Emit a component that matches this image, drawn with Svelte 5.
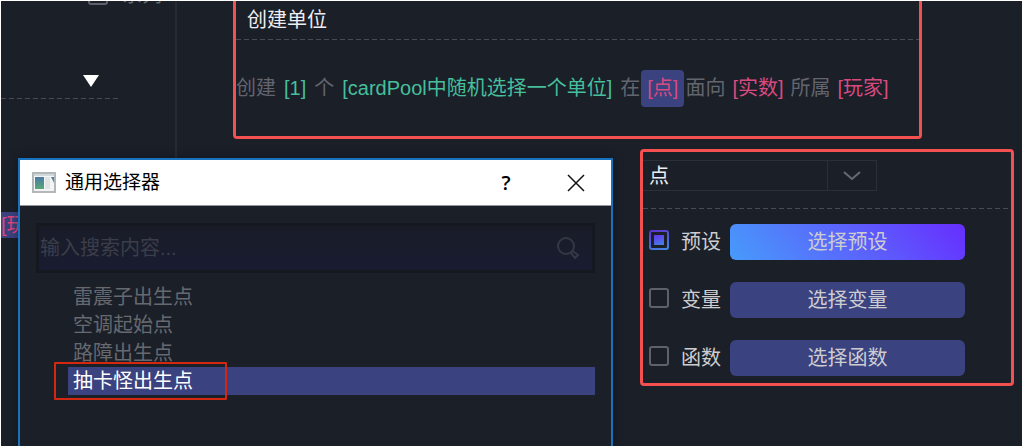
<script lang="ts">
  interface Token {
    text: string;
    kind: 'plain' | 'value' | 'empty';
    active?: boolean;
  }

  interface Source {
    id: string;
    label: string;
  }

  const tokens: Token[] = [
    { text: '创建', kind: 'plain' },
    { text: '[1]', kind: 'value' },
    { text: '个', kind: 'plain' },
    { text: '[cardPool中随机选择一个单位]', kind: 'value' },
    { text: '在', kind: 'plain' },
    { text: '[点]', kind: 'empty', active: true },
    { text: '面向', kind: 'plain' },
    { text: '[实数]', kind: 'empty' },
    { text: '所属', kind: 'plain' },
    { text: '[玩家]', kind: 'empty' },
  ];

  const sources: Source[] = [
    { id: 'preset', label: '预设' },
    { id: 'variable', label: '变量' },
    { id: 'function', label: '函数' },
  ];

  const points = ['雷震子出生点', '空调起始点', '路障出生点', '抽卡怪出生点'];

  let source = $state('preset');
  let point = $state('抽卡怪出生点');
  let query = $state('');
</script>

<div class="editor">
  <aside class="sidebar">
    <label class="series">
      <input type="checkbox" class="check" />
      系列
    </label>
    <button class="fold dashed" aria-label="折叠">
      <svg width="16" height="12" viewBox="0 0 16 12"><path d="M0 0h16L8 12z" fill="#fff" /></svg>
    </button>
    <button class="param">[玩家]</button>
  </aside>

  <main class="main">
    <section class="card action">
      <h2 class="action-title dashed">创建单位</h2>
      <p class="sentence">
        {#each tokens as token}
          {#if token.kind === 'plain'}
            <span>{token.text}</span>
          {:else}
            <button class="token {token.kind}" class:active={token.active}>{token.text}</button>
          {/if}
        {/each}
      </p>
    </section>

    <section class="card picker">
      <div class="type-row dashed">
        <div class="type">
          <select class="type-select" aria-label="类型">
            <option>点</option>
          </select>
          <span class="type-arrow">
            <svg width="18" height="10" viewBox="0 0 18 10">
              <path d="M1 1l8 7 8-7" fill="none" stroke="#666a73" stroke-width="2" />
            </svg>
          </span>
        </div>
      </div>
      <div class="sources">
        {#each sources as item}
          <div class="source">
            <label class="source-label">
              <input
                type="checkbox"
                class="check"
                checked={source === item.id}
                onchange={() => (source = item.id)}
              />
              {item.label}
            </label>
            <button class="choose" class:current={source === item.id}>选择{item.label}</button>
          </div>
        {/each}
      </div>
    </section>
  </main>

  <div class="dialog" role="dialog" aria-labelledby="dialog-title">
    <header class="titlebar">
      <svg width="24" height="21" viewBox="0 0 24 21">
        <defs>
          <linearGradient id="pane" x1="0" y1="0" x2="0" y2="1">
            <stop offset="0" stop-color="#4b79a8" />
            <stop offset="1" stop-color="#58a877" />
          </linearGradient>
        </defs>
        <rect x="1" y="1" width="22" height="19" fill="#f4f4f5" stroke="#b4b7b9" stroke-width="2" />
        <path d="M2 2h20v2H2z" fill="#d3d8da" />
        <rect x="3" y="5" width="9" height="12" fill="url(#pane)" />
        <rect x="13" y="5" width="5" height="12" fill="#e2e3e5" />
        <path d="M19 5h3v6z" fill="url(#pane)" />
      </svg>
      <h1 class="dialog-title" id="dialog-title">通用选择器</h1>
      <button class="window-button" aria-label="帮助">?</button>
      <button class="window-button" aria-label="关闭">
        <svg width="18" height="18" viewBox="0 0 18 18">
          <path d="M1 1l16 16M17 1L1 17" stroke="#111" stroke-width="1.5" />
        </svg>
      </button>
    </header>
    <div class="dialog-body">
      <div class="search">
        <input class="search-input" placeholder="输入搜索内容..." aria-label="搜索" bind:value={query} />
        <svg width="24" height="24" viewBox="0 0 24 24" fill="none" stroke="#353844" stroke-width="2">
          <circle cx="10" cy="10" r="8" />
          <path d="M15 17l2-2 5 4-3 3z" />
        </svg>
      </div>
      <ul class="points">
        {#each points as name}
          <li>
            <button class="point" class:selected={point === name} onclick={() => (point = name)}>
              {name}
            </button>
          </li>
        {/each}
      </ul>
    </div>
  </div>
</div>

<style>
  :global(body) {
    background: #1b1f28;
  }

  .editor,
  .editor * {
    box-sizing: border-box;
  }

  .editor {
    position: relative;
    display: flex;
    height: 100vh;
    overflow: hidden;
    border-top: 1px solid #fff;
    border-left: 1px solid #fff;
    background: #1b1f28;
    color: #cdcdd0;
    font-family: "Liberation Sans", "Noto Sans CJK SC", sans-serif;
    font-size: 20px;
    line-height: 28px;
  }

  button,
  input,
  select {
    margin: 0;
    padding: 0;
    border: 0;
    background: none;
    color: inherit;
    font: inherit;
  }

  h1,
  h2,
  p,
  ul {
    margin: 0;
    padding: 0;
    font-size: 20px;
    font-weight: 400;
    list-style: none;
  }

  .dashed {
    background: repeating-linear-gradient(90deg, #484b54 0 5px, transparent 5px 8px) left bottom / 100% 1px no-repeat;
  }

  .check {
    appearance: none;
    flex: none;
    width: 20px;
    height: 20px;
    border: 2px solid #5e616a;
    border-radius: 3px;
  }

  .check:checked {
    padding: 3px;
    border-color: transparent;
    background:
      linear-gradient(160deg, #6732ee, #4385e0) content-box,
      linear-gradient(#1b1f28, #1b1f28) padding-box,
      linear-gradient(160deg, #5f2fd0, #418de0) border-box;
  }

  .sidebar {
    flex: none;
    display: flex;
    flex-direction: column;
    align-items: flex-start;
    width: 176px;
    border-right: 2px solid #262a35;
  }

  .series {
    display: flex;
    align-items: center;
    gap: 14px;
    height: 28px;
    margin: -20px 0 0 87px;
    color: #666a70;
  }

  .fold {
    display: flex;
    width: 120px;
    height: 90px;
    padding: 66px 0 0 82px;
  }

  .param {
    height: 26px;
    margin-top: 113px;
    background-color: #3a4280;
    color: #e0457b;
    line-height: 26px;
  }

  .main {
    flex: 1;
    display: flex;
    flex-direction: column;
    gap: 10px;
    min-width: 0;
  }

  .card {
    border: 3px solid #f4504f;
    border-radius: 4px;
  }

  .action {
    height: 138px;
    margin: 0 100px 0 56px;
    border-top: 0;
    border-radius: 0 0 4px 4px;
  }

  .action-title {
    height: 39px;
    padding: 5px 11px;
    color: #eeeef2;
  }

  .sentence {
    display: flex;
    gap: 1px;
    align-items: center;
    height: 96px;
    color: #62656e;
    white-space: nowrap;
  }

  .token {
    height: 37px;
    border-radius: 4px;
  }

  .value {
    padding: 0 7px;
    color: #46bf9c;
  }

  .empty {
    padding: 0 6px;
    color: #d94a80;
  }

  .active {
    background: #3a4280;
  }

  .picker {
    align-self: flex-end;
    width: 374px;
    height: 237px;
    margin-right: 8px;
  }

  .type-row {
    height: 57px;
    padding-top: 8px;
  }

  .type {
    display: grid;
    grid-template-columns: 1fr 49px;
    width: 234px;
    height: 31px;
    border: 1px solid #2b2f3a;
    border-left: 0;
  }

  .type-select {
    appearance: none;
    grid-area: 1 / 1 / 2 / 3;
    padding: 0 6px;
    color: #eeeef2;
  }

  .type-arrow {
    display: grid;
    grid-area: 1 / 2;
    place-items: center;
    border-left: 1px solid #2b2f3a;
    pointer-events: none;
  }

  .sources {
    display: flex;
    flex-direction: column;
    gap: 22px;
    padding: 15px 46px 0 6px;
  }

  .source {
    display: flex;
    height: 36px;
  }

  .source-label {
    display: flex;
    flex: none;
    gap: 12px;
    align-items: center;
    width: 81px;
  }

  .source-label .check {
    margin-bottom: 4px;
  }

  .choose {
    flex: 1;
    border-radius: 6px;
    background: #3a4280;
  }

  .choose.current {
    background: linear-gradient(50deg, #479bfb, #5a66fb 50%, #672eff);
  }

  /* floating window over the editor */
  .dialog {
    position: absolute;
    top: 157px;
    left: 17px;
    width: 595px;
    height: 320px;
    border: 2px solid #1872be;
    background: #1b1f28;
    box-shadow: 0 0 10px rgb(0 0 0 / 35%);
  }

  .titlebar {
    display: flex;
    align-items: center;
    height: 46px;
    padding: 0 13px 0 12px;
    border-bottom: 1px solid #92959a;
    background: #fff;
    color: #000;
  }

  .dialog-title {
    flex: 1;
    margin-left: 9px;
    font-size: 19px;
  }

  .window-button {
    display: grid;
    place-items: center;
    width: 44px;
    height: 44px;
    margin-left: 26px;
    font-family: "Open Sans", sans-serif;
    font-weight: 600;
  }

  .dialog-body {
    padding: 17px 16px 0;
  }

  .search {
    display: flex;
    align-items: center;
    height: 50px;
    padding: 0 12px 0 1px;
    border: 3px solid #161820;
    background: linear-gradient(#191c27, #191c31);
  }

  .search-input {
    flex: 1;
    min-width: 0;
    outline: 0;
  }

  .search-input::placeholder {
    color: #3b3e49;
    opacity: 1;
  }

  .points {
    padding: 10px 0 0 32px;
  }

  .point {
    display: block;
    width: 100%;
    height: 28px;
    padding: 0 5px;
    color: #666970;
    text-align: left;
  }

  .point.selected {
    position: relative;
    background: #3a4280;
    color: #fff;
  }

  /* marker around the chosen row */
  .point.selected::after {
    content: "";
    position: absolute;
    box-sizing: border-box;
    top: -5px;
    left: -14px;
    width: 173px;
    height: 38px;
    border: 2px solid #d32810;
    border-radius: 1px;
  }
</style>
